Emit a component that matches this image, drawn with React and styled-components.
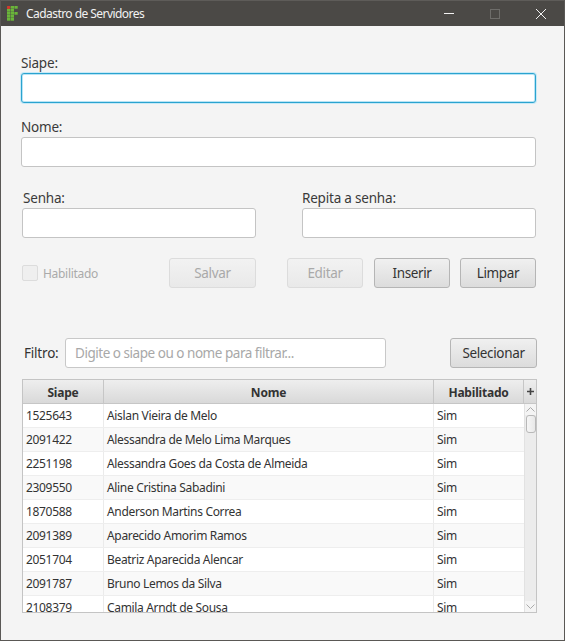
import React from "react";
import styled, { createGlobalStyle } from "styled-components";

const Global = createGlobalStyle`
  html, body { margin: 0; padding: 0; background: #f4f4f4; }
  * { box-sizing: border-box; }
`;
const Win = styled.div`
  width: 565px; height: 641px; display: flex; flex-direction: column; overflow: hidden;
  background: #f4f4f4; font-family: "Noto Sans", "Open Sans", sans-serif; color: #333;
  border: 1px solid #5a5855; border-top: 0;
`;
const TitleBar = styled.div`
  height: 26px; flex: none; background: #4b4946; display: flex; align-items: center; margin: 0 -1px;
  border-top: 1px solid #5e5c59; color: #f2f2f2; font-size: 12px; padding-left: 7px;
`;
const TitleText = styled.span`
  margin-left: 8px; flex: 1; letter-spacing: -0.55px;
`;
const WinBtns = styled.div`
  display: flex; align-items: center; margin-right: 1px;
`;
const WinBtn = styled.div`
  width: 46px; height: 25px; display: flex; align-items: center; justify-content: center;
`;
const Content = styled.div`
  flex: 1; min-height: 0; padding: 0 28px 0 20px; display: flex; flex-direction: column;
`;
const Label = styled.label`
  display: block; font-size: 13.5px; line-height: 20px; letter-spacing: -0.2px; color: #3a3a3a;
  margin-left: ${p => p.$indent || 0}px;
`;
const Input = styled.div`
  height: 30px; width: 100%; background: #fff; border-radius: 3px;
  border: 1px solid ${p => p.$focus ? "#2aa3cf" : "#c4c4c4"};
  box-shadow: ${p => p.$focus ? "0 0 0 1px #c8e9f6, inset 0 0 0 1px #b9e4f5" : "none"};
`;
const Field = styled.div`
  margin-top: ${p => p.$mt}px;
`;
const TwoCols = styled.div`
  display: flex; justify-content: space-between; margin-top: 21px; padding-left: 1px;
`;
const Col = styled.div`
  width: 234px;
`;
const Actions = styled.div`
  display: flex; align-items: center; margin-top: 20px; padding-left: 1px; height: 30px;
`;
const Check = styled.div`
  width: 16px; height: 16px; border: 1px solid #dcdcdc; border-radius: 2px; background: #efefef;
`;
const CheckLabel = styled.span`
  font-size: 12px; color: #aaa; margin-left: 5px; width: 126px; letter-spacing: -0.3px;
`;
const Btn = styled.div`
  width: ${p => p.$w}px; height: 30px; flex: none; margin-left: ${p => p.$ml || 0}px;
  display: flex; align-items: center; justify-content: center; font-size: 13.5px; letter-spacing: -0.35px; border-radius: 3px;
  color: ${p => p.$off ? "#a9a9a9" : "#333"};
  border: 1px solid ${p => p.$off ? "#dcdcdc" : "#b5b5b5"};
  background: ${p => p.$off ? "linear-gradient(#f2f2f2,#e9e9e9)" : "linear-gradient(#f0f0f0,#dcdcdc)"};
`;
const FilterRow = styled.div`
  display: flex; align-items: center; margin: 50px -1px 0 0; padding-left: 3px;
`;
const FilterLabel = styled.span`
  font-size: 13.5px; letter-spacing: -0.2px; color: #333; width: 41px; flex: none;
`;
const FilterInput = styled.div`
  width: 321px; height: 30px; flex: none; background: #fff; border: 1px solid #c8c8c8; border-radius: 3px;
  font-size: 13.5px; letter-spacing: -0.47px; color: #a8a8a8; padding-left: 9px; display: flex; align-items: center; white-space: nowrap;
`;
const Table = styled.div`
  margin: 11px 0 0 1px; width: 515px; height: 234px; border: 1px solid #c4c4c4; display: flex; flex-direction: column;
  overflow: hidden; background: #fff;
`;
const Head = styled.div`
  display: flex; height: 24px; flex: none; background: linear-gradient(#eeeeee,#d9d9d9);
  border-bottom: 1px solid #c6c6c6;
`;
const HeadCell = styled.div`
  width: ${p => p.$w}px; flex: none; display: flex; align-items: center; justify-content: center; padding-top: 2px;
  font-size: 12px; font-weight: 700; letter-spacing: -0.2px; color: #333; border-right: 1px solid #c6c6c6;
`;
const PlusCell = styled.div`
  flex: 1; display: flex; align-items: center; justify-content: center;
`;
const Body = styled.div`
  flex: 1; min-height: 0; display: flex;
`;
const Rows = styled.div`
  width: 501px; flex: none; overflow: hidden;
`;
const Row = styled.div`
  display: flex; height: 24px; background: ${p => p.$odd ? "#f9f9f9" : "#fff"}; border-bottom: 1px solid #eeeeee;
`;
const Cell = styled.div`
  width: ${p => p.$w}px; flex: none; display: flex; align-items: center; padding-left: 3px;
  font-size: 12px; color: #333; border-right: 1px solid ${p => p.$last ? "transparent" : "#ebebeb"}; white-space: nowrap;
  letter-spacing: -0.33px;
`;
const Scroll = styled.div`
  flex: 1; background: #ececec; border-left: 1px solid #e2e2e2; display: flex; flex-direction: column; align-items: center;
`;
const ScrollEnd = styled.div`
  height: 11px; flex: none; width: 100%; display: flex; align-items: center; justify-content: center; background: #f4f4f4;
`;
const Thumb = styled.div`
  width: 10px; height: 18px; flex: none; border: 1px solid #b8b8b8; border-radius: 3px; background: linear-gradient(90deg,#f6f6f6,#e8e8e8);
`;
const Spacer = styled.div`
  flex: 1;
`;

const data = [
  ["1525643", "Aislan Vieira de Melo"],
  ["2091422", "Alessandra de Melo Lima Marques"],
  ["2251198", "Alessandra Goes da Costa de Almeida"],
  ["2309550", "Aline Cristina Sabadini"],
  ["1870588", "Anderson Martins Correa"],
  ["2091389", "Aparecido Amorim Ramos"],
  ["2051704", "Beatriz Aparecida Alencar"],
  ["2091787", "Bruno Lemos da Silva"],
  ["2108379", "Camila Arndt de Sousa"],
];

const logoCells = [[3.7,0],[7.4,0],[0,3],[3.7,3],[0,6],[3.7,6],[7.4,6],[0,9],[3.7,9],[0,12],[3.7,12]];
const Logo = () => (
  <svg width="11" height="15" viewBox="0 0 11 15">
    <circle cx="1.6" cy="1.5" r="1.8" fill="#cf3a2c" />
    {logoCells.map(([x, y]) => (
      <rect key={`${x}-${y}`} x={x} y={y} width="3.3" height="2.7" fill="#6ab53a" />
    ))}
  </svg>
);

export default function App() {
  return (
    <Win>
      <Global />
      <TitleBar>
        <Logo />
        <TitleText>Cadastro de Servidores</TitleText>
        <WinBtns>
          <WinBtn><svg width="10" height="2"><rect width="10" height="1" fill="#f2f2f2" /></svg></WinBtn>
          <WinBtn><svg width="10" height="10"><rect x=".5" y=".5" width="9" height="9" fill="none" stroke="#6e6d6a" /></svg></WinBtn>
          <WinBtn><svg width="12" height="12" viewBox="0 0 12 12"><path d="M1 1l10 10M11 1L1 11" stroke="#f2f2f2" fill="none" /></svg></WinBtn>
        </WinBtns>
      </TitleBar>
      <Content>
        <Field $mt={27}>
          <Label>Siape:</Label>
          <Input $focus />
        </Field>
        <Field $mt={14}>
          <Label>Nome:</Label>
          <Input />
        </Field>
        <TwoCols>
          <Col>
            <Label $indent={1}>Senha:</Label>
            <Input />
          </Col>
          <Col>
            <Label>Repita a senha:</Label>
            <Input />
          </Col>
        </TwoCols>
        <Actions>
          <Check />
          <CheckLabel>Habilitado</CheckLabel>
          <Btn $w={87} $off>Salvar</Btn>
          <Btn $w={76} $ml={31} $off>Editar</Btn>
          <Btn $w={76} $ml={11}>Inserir</Btn>
          <Btn $w={76} $ml={10}>Limpar</Btn>
        </Actions>
        <FilterRow>
          <FilterLabel>Filtro:</FilterLabel>
          <FilterInput>Digite o siape ou o nome para filtrar...</FilterInput>
          <Spacer />
          <Btn $w={87}>Selecionar</Btn>
        </FilterRow>
        <Table>
          <Head>
            <HeadCell $w={81}>Siape</HeadCell>
            <HeadCell $w={330}>Nome</HeadCell>
            <HeadCell $w={90}>Habilitado</HeadCell>
            <PlusCell>
              <svg width="7" height="7" viewBox="0 0 7 7"><path d="M3.5 0v7M0 3.5h7" stroke="#444" strokeWidth="1.6" /></svg>
            </PlusCell>
          </Head>
          <Body>
            <Rows>
              {data.map((d, i) => (
                <Row key={d[0]} $odd={i % 2 === 1}>
                  <Cell $w={81}>{d[0]}</Cell>
                  <Cell $w={330}>{d[1]}</Cell>
                  <Cell $w={90} $last>Sim</Cell>
                </Row>
              ))}
            </Rows>
            <Scroll>
              <ScrollEnd>
                <svg width="9" height="5" viewBox="0 0 9 5"><path d="M.5 4.5l4-4 4 4" stroke="#aaa" fill="none" /></svg>
              </ScrollEnd>
              <Thumb />
              <Spacer />
              <ScrollEnd>
                <svg width="9" height="5" viewBox="0 0 9 5"><path d="M.5.5l4 4 4-4" stroke="#aaa" fill="none" /></svg>
              </ScrollEnd>
            </Scroll>
          </Body>
        </Table>
      </Content>
    </Win>
  );
}
